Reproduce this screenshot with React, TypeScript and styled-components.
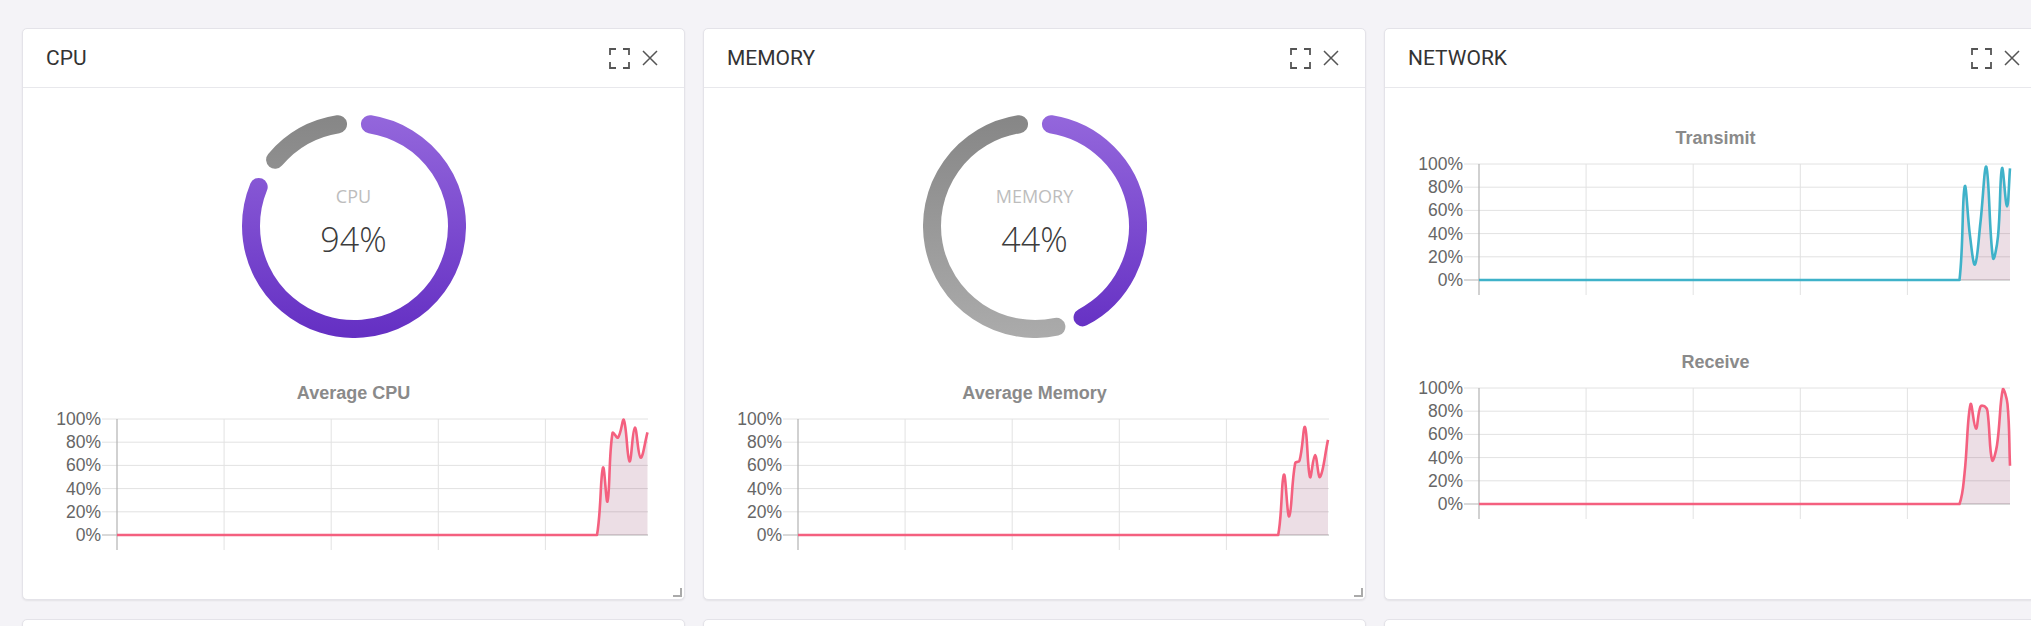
import React, { useId } from "react";
import styled, { createGlobalStyle } from "styled-components";

const GlobalStyle = createGlobalStyle`
  html, body {
    margin: 0;
    padding: 0;
  }
  body {
    width: 2031px;
    height: 626px;
    overflow: hidden;
    background: #f4f3f7;
    font-family: Roboto, "Liberation Sans", Arial, sans-serif;
  }
`;

const Board = styled.div`
  box-sizing: border-box;
  height: 626px;
  overflow: hidden;
  display: grid;
  grid-template-columns: repeat(3, 663px);
  grid-auto-rows: 572px;
  column-gap: 18px;
  row-gap: 19px;
  padding: 28px 0 0 22px;
`;

const Card = styled.section`
  position: relative;
  box-sizing: border-box;
  height: 572px;
  display: flex;
  flex-direction: column;
  background: #fff;
  border: 1px solid #e4e3e9;
  border-radius: 5px;
  box-shadow: 0 1px 2px rgba(0, 0, 0, 0.07);
`;

const Header = styled.header`
  box-sizing: border-box;
  height: 59px;
  flex-shrink: 0;
  display: flex;
  align-items: center;
  padding: 0 26px 0 23px;
  border-bottom: 1px solid #e8e8ec;
`;

const Title = styled.h2`
  flex: 1;
  margin: 0;
  font-family: Roboto, "Liberation Sans", sans-serif;
  font-size: 21px;
  font-weight: 400;
  color: #333;
`;

const Tools = styled.div`
  display: flex;
  align-items: center;
  gap: 12px;
  color: #555;

  svg {
    display: block;
  }
`;

const Body = styled.div`
  flex: 1;
  display: flex;
  flex-direction: column;
  align-items: center;
`;

const ResizeHandle = styled.span`
  position: absolute;
  right: 2px;
  bottom: 2px;
  width: 7px;
  height: 7px;
  border-right: 2px solid #aaa;
  border-bottom: 2px solid #aaa;
`;

const GaugeWrap = styled.div`
  position: relative;
  width: 224px;
  height: 224px;
  margin-top: 26px;

  svg {
    display: block;
  }
`;

const GaugeCenter = styled.div`
  position: absolute;
  inset: 0;
  box-sizing: border-box;
  display: flex;
  flex-direction: column;
  align-items: center;
  justify-content: center;
  gap: 13px;
  padding-bottom: 8px;
`;

const GaugeLabel = styled.span`
  font-family: "Open Sans", "Noto Sans", sans-serif;
  font-size: 18px;
  line-height: 20px;
  color: #bdbdbd;
`;

const GaugeValue = styled.span`
  font-family: "Open Sans", "Noto Sans", sans-serif;
  font-size: 34px;
  font-weight: 300;
  line-height: 40px;
  color: #3c3c3c;
`;

const ChartBlock = styled.div<{ $top: number }>`
  width: 100%;
  margin-top: ${(p) => p.$top}px;
  display: flex;
  flex-direction: column;
  align-items: center;
`;

const ChartTitle = styled.div`
  font-family: "Liberation Sans", Arial, sans-serif;
  font-size: 18px;
  font-weight: 700;
  line-height: 20px;
  color: #8a8a8a;
`;

const ChartSvg = styled.svg`
  display: block;
  width: 661px;
  height: 150px;
`;

const ExpandIcon = () => (
  <svg width="21" height="21" viewBox="0 0 21 21" fill="none" stroke="currentColor" strokeWidth="1.8">
    <path d="M1 7V1h6M14 1h6v6M20 14v6h-6M7 20H1v-6" />
  </svg>
);

const CloseIcon = () => (
  <svg width="16" height="16" viewBox="0 0 16 16" fill="none" stroke="currentColor" strokeWidth="1.5">
    <path d="M1 1l14 14M15 1L1 15" />
  </svg>
);

const gaugeArc = (a0: number, a1: number) => {
  const c = 112;
  const r = 103;
  const pt = (a: number) => {
    const rad = (a * Math.PI) / 180;
    return `${(c + r * Math.sin(rad)).toFixed(2)} ${(c - r * Math.cos(rad)).toFixed(2)}`;
  };
  const large = a1 - a0 > 180 ? 1 : 0;
  return `M ${pt(a0)} A ${r} ${r} 0 ${large} 1 ${pt(a1)}`;
};

type GaugeProps = {
  label: string;
  value: string;
  used: [number, number];
  rest: [number, number];
};

const Gauge = ({ label, value, used, rest }: GaugeProps) => {
  const id = useId().replace(/:/g, "");
  return (
    <GaugeWrap>
      <svg width="224" height="224" viewBox="0 0 224 224">
        <defs>
          <linearGradient id={`p${id}`} x1="0" y1="0" x2="0" y2="224" gradientUnits="userSpaceOnUse">
            <stop offset="0" stopColor="#9467dc" />
            <stop offset="1" stopColor="#642fc3" />
          </linearGradient>
          <linearGradient id={`g${id}`} x1="0" y1="0" x2="0" y2="224" gradientUnits="userSpaceOnUse">
            <stop offset="0" stopColor="#868686" />
            <stop offset="1" stopColor="#ababab" />
          </linearGradient>
        </defs>
        <path d={gaugeArc(rest[0], rest[1])} fill="none" stroke={`url(#g${id})`} strokeWidth="18" strokeLinecap="round" />
        <path d={gaugeArc(used[0], used[1])} fill="none" stroke={`url(#p${id})`} strokeWidth="18" strokeLinecap="round" />
      </svg>
      <GaugeCenter>
        <GaugeLabel>{label}</GaugeLabel>
        <GaugeValue>{value}</GaugeValue>
      </GaugeCenter>
    </GaugeWrap>
  );
};

// plot geometry inside the chart svg
const PL = 94;
const PR = 625;
const PT = 16;
const PB = 132;
const TB = 147;
const GRID_X = [0, 107.1, 214.2, 321.3, 428.4];
const TICKS = [100, 80, 60, 40, 20, 0];
const STEP = 5.6;

type Pt = [number, number];

// flat run of zero samples up to the point where the load starts
const idle = (until: number): Pt[] => {
  const out: Pt[] = [];
  for (let x = until; x >= 0; x -= STEP) out.unshift([x, 0]);
  if (out[0][0] > 0) out.unshift([0, 0]);
  return out;
};

const toPx = (p: Pt): Pt => [PL + p[0], PB - (p[1] / 100) * (PB - PT)];

const clampY = (y: number) => Math.min(PB, Math.max(PT, y));

const splinePath = (data: Pt[]) => {
  const pts = data.map(toPx);
  const t = 0.4;
  const cps = pts.map((p, i) => {
    const prev = pts[i - 1] ?? p;
    const next = pts[i + 1] ?? p;
    const d01 = Math.hypot(p[0] - prev[0], p[1] - prev[1]);
    const d12 = Math.hypot(next[0] - p[0], next[1] - p[1]);
    const sum = d01 + d12 || 1;
    const fa = (t * d01) / sum;
    const fb = (t * d12) / sum;
    return {
      a: [p[0] - fa * (next[0] - prev[0]), clampY(p[1] - fa * (next[1] - prev[1]))],
      b: [p[0] + fb * (next[0] - prev[0]), clampY(p[1] + fb * (next[1] - prev[1]))],
    };
  });
  let d = `M${pts[0][0]},${pts[0][1]}`;
  for (let i = 1; i < pts.length; i++) {
    const c1 = cps[i - 1].b;
    const c2 = cps[i].a;
    d += ` C${c1[0].toFixed(2)},${c1[1].toFixed(2)} ${c2[0].toFixed(2)},${c2[1].toFixed(2)} ${pts[i][0].toFixed(2)},${pts[i][1].toFixed(2)}`;
  }
  return { d, last: pts[pts.length - 1] };
};

type ChartProps = {
  title: string;
  data: Pt[];
  color: string;
  top: number;
};

const LineChart = ({ title, data, color, top }: ChartProps) => {
  const { d, last } = splinePath(data);
  const area = `${d} L${last[0]},${PB} L${PL},${PB} Z`;
  return (
    <ChartBlock $top={top}>
      <ChartTitle>{title}</ChartTitle>
      <ChartSvg viewBox="0 0 661 150">
        {GRID_X.slice(1).map((x) => (
          <line key={x} x1={PL + x} y1={PT} x2={PL + x} y2={TB} stroke="#e2e2e2" strokeWidth="1" />
        ))}
        {TICKS.map((v) => {
          const y = PB - (v / 100) * (PB - PT);
          return (
            <g key={v}>
              <line x1={79} y1={y} x2={PR} y2={y} stroke={v === 0 ? "#b3b3b3" : "#e2e2e2"} strokeWidth="1" />
              <text
                x={78}
                y={y}
                textAnchor="end"
                dominantBaseline="central"
                fontFamily="'Liberation Sans', Arial, sans-serif"
                fontSize="17.5"
                fill="#666"
              >
                {v}%
              </text>
            </g>
          );
        })}
        <line x1={PL} y1={PT} x2={PL} y2={TB} stroke="#b3b3b3" strokeWidth="1.2" />
        <path d={area} fill="rgba(140, 60, 100, 0.17)" />
        <path d={d} fill="none" stroke={color} strokeWidth="2.6" strokeLinejoin="round" />
      </ChartSvg>
    </ChartBlock>
  );
};

const PINK = "#f4607f";
const TEAL = "#3fb2c9";

const cpuData: Pt[] = [
  ...idle(480),
  [486, 58], [490.5, 29], [495.5, 88], [501, 84], [506.7, 99.5],
  [512.5, 63.5], [517.8, 92.5], [523.6, 66.7], [530.5, 88.5],
];

const memData: Pt[] = [
  ...idle(480.2),
  [485.9, 52], [491.2, 16], [497.2, 62], [501.5, 64], [507, 93],
  [512, 50], [517, 69], [522, 50], [530, 82],
];

const txData: Pt[] = [
  ...idle(480.5),
  [485.7, 80.5], [491, 38], [496, 13.4], [501.5, 50], [507.3, 97.7], [514, 19],
  [519, 37.7], [523, 96.3], [528, 63.4], [531, 96.3],
];

const rxData: Pt[] = [
  ...idle(480.5),
  [485.5, 26], [491.5, 86], [496.9, 65], [501.5, 84], [506, 84],
  [508.5, 80], [513.1, 37.7], [518, 50.7], [523.9, 99], [528.5, 86], [531, 33],
];

const Panel = ({ title, children }: { title: string; children: React.ReactNode }) => (
  <Card>
    <Header>
      <Title>{title}</Title>
      <Tools>
        <ExpandIcon />
        <CloseIcon />
      </Tools>
    </Header>
    <Body>{children}</Body>
    <ResizeHandle />
  </Card>
);

const App = () => (
  <>
    <GlobalStyle />
    <Board>
      <Panel title="CPU">
        <Gauge label="CPU" value="94%" used={[8.9, 292.3]} rest={[310, 351.1]} />
        <LineChart title="Average CPU" data={cpuData} color={PINK} top={45} />
      </Panel>
      <Panel title="MEMORY">
        <Gauge label="MEMORY" value="44%" used={[8.9, 152.5]} rest={[168, 351.1]} />
        <LineChart title="Average Memory" data={memData} color={PINK} top={45} />
      </Panel>
      <Panel title="NETWORK">
        <LineChart title="Transimit" data={txData} color={TEAL} top={40} />
        <LineChart title="Receive" data={rxData} color={PINK} top={54} />
      </Panel>
      <Card />
      <Card />
      <Card />
    </Board>
  </>
);

export default App;
